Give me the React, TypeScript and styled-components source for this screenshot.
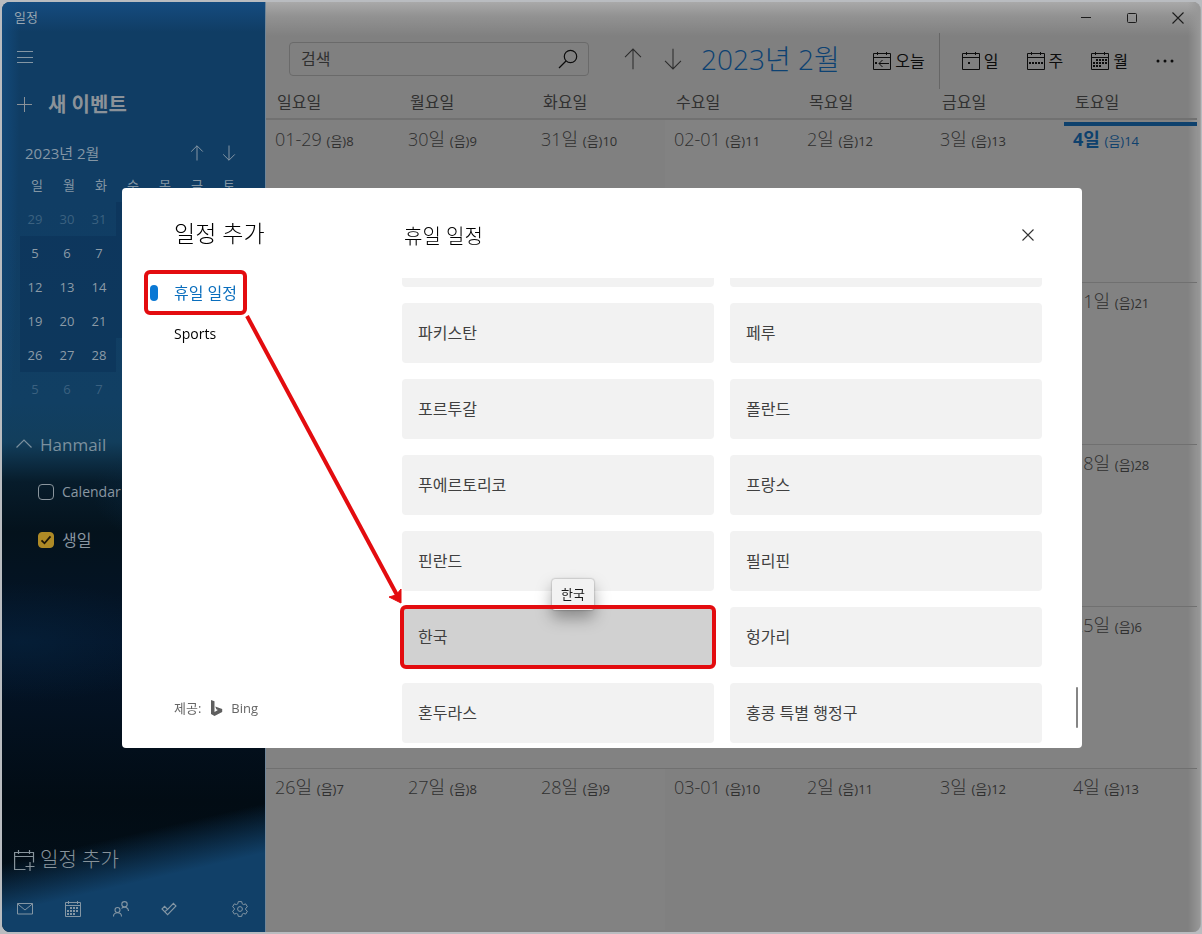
import React from "react";
import styled, { createGlobalStyle, css } from "styled-components";

const GlobalStyle = createGlobalStyle`
  *, *::before, *::after { box-sizing: border-box; }
  body {
    margin: 0;
    background: #b9bcc0;
    font-family: "Open Sans", "Noto Sans CJK KR", sans-serif;
    font-size: 16px;
    line-height: 24px;
  }
  button, input { font: inherit; color: inherit; }
  button { border: 0; padding: 0; margin: 0; background: none; cursor: pointer; }
  h1, h2, h3 { margin: 0; padding: 0; font-size: inherit; font-weight: inherit; }
  svg { display: block; flex: none; }
`;

/* ---------- Window ---------- */

const Page = styled.div`
  display: flex;
  min-height: 100vh;
  padding: 2px 1px 2px 2px;
`;

const AppWindow = styled.div`
  display: flex;
  flex: 1;
  min-width: 0;
  border-right: 1px solid #a2a2a2;
  border-radius: 8px;
  overflow: hidden;
`;

/* ---------- Sidebar ---------- */

const Sidebar = styled.aside`
  display: flex;
  flex-direction: column;
  flex: none;
  width: 263px;
  color: #8496a4;
  background:
    radial-gradient(18px 480px at 0 0, #144e82c0 0, #144e8200 100%),
    linear-gradient(to bottom, #154c80 0, #154c8000 30px),
    linear-gradient(167deg, #11406800 87%, #114068 92%),
    radial-gradient(160px 60px at 20px 640px, #06243f90 0, #06243f00 100%),
    radial-gradient(110px 60px at 200px 490px, #0a2c48c0 0, #0a2c4800 100%),
    linear-gradient(to bottom, #103d64 0, #103d64 200px, #113f63 400px, #123e5c 440px, #071c2b 480px, #04121c 530px, #04152a 640px, #020c14 800px, #03101b 100%);
`;

const AppTitle = styled.h1`
  padding: 3px 12px;
  font-size: 13px;
  color: #98a5b0;
`;

const MenuButton = styled.button`
  display: flex;
  align-items: center;
  width: 48px;
  height: 50px;
  padding-left: 15px;
`;

const NewEvent = styled.button`
  display: flex;
  align-items: center;
  gap: 15px;
  height: 46px;
  padding: 0 15px;
  font-size: 20px;
  font-weight: 700;
  color: #8b9299;
`;

const MonthBar = styled.div`
  display: flex;
  align-items: center;
  gap: 16px;
  height: 50px;
  padding: 0 28px 0 23px;
  font-size: 15px;
  h2 { flex: 1; }
`;

const MiniGrid = styled.div`
  display: grid;
  grid-template-columns: repeat(7, 32px);
  padding-left: 18px;
  font-size: 13px;
  text-align: center;
`;

const MiniLabel = styled.span`
  padding-left: 2px;
  line-height: 14px;
  height: 24px;
`;

const MiniDay = styled.button<{ $inMonth: boolean }>`
  height: 34px;
  padding-right: 2px;
  ${(p) =>
    p.$inMonth
      ? css`background: #09305680; color: #8c9ba7;`
      : css`color: #3b6180;`}
`;

const Account = styled.button`
  display: flex;
  align-items: center;
  gap: 8px;
  height: 46px;
  margin-top: 16px;
  padding: 0 14px;
  font-size: 17px;
  color: #7b909e;
`;

const CalendarItem = styled.label`
  display: flex;
  align-items: center;
  gap: 8px;
  height: 48px;
  padding-left: 36px;
  color: #8a97a1;
`;

const CheckWrap = styled.span`
  position: relative;
  width: 16px;
  height: 16px;
  svg { position: absolute; inset: 0; pointer-events: none; }
`;

const CheckBox = styled.input`
  appearance: none;
  display: block;
  width: 16px;
  height: 16px;
  margin: 0;
  border: 1px solid #8a959d;
  border-radius: 4px;
  &:checked { background: #ae8a26; border-color: #ae8a26; }
`;

const LatinName = styled.span`
  font-size: 14px;
`;

const AddCalendar = styled.button`
  display: flex;
  align-items: center;
  gap: 5px;
  height: 50px;
  margin-top: auto;
  padding: 0 12px 2px;
  font-size: 20px;
  font-weight: 300;
  color: #87939b;
`;

const AppBar = styled.nav`
  display: flex;
  height: 46px;
`;

const AppBarButton = styled.button<{ $end?: boolean }>`
  display: flex;
  align-items: center;
  justify-content: center;
  width: 48px;
  height: 46px;
  padding-right: 2px;
  ${(p) => p.$end && css`margin-left: auto;`}
`;

/* ---------- Main calendar ---------- */

const Main = styled.main`
  display: flex;
  flex-direction: column;
  flex: 1;
  min-width: 0;
  padding: 0 0 2px 1px;
  color: #303030;
  background:
    linear-gradient(to right, #6f8598 0, #6f8598 1px, transparent 1px),
    linear-gradient(to left, #989898 0, #98989800 12px),
    linear-gradient(to bottom, #a9a9a9 0, #929292 14px, #80808000 34px),
    #808080;
`;

const TitleBar = styled.div`
  display: flex;
  justify-content: flex-end;
  height: 31px;
`;

const CaptionButton = styled.button`
  display: flex;
  align-items: center;
  justify-content: center;
  width: 46px;
  padding-left: 2px;
  color: #1c1c1c;
`;

const Toolbar = styled.div`
  display: flex;
  align-items: center;
  height: 56px;
  padding: 0 12px 0 23px;
  color: #0c0c0c;
`;

const MonthTools = styled.div`
  display: flex;
  align-items: center;
  flex: 1;
  min-width: 0;
  padding-bottom: 4px;
`;

const SearchBox = styled.div`
  display: flex;
  align-items: center;
  flex: 0 1 300px;
  min-width: 0;
  height: 34px;
  margin-right: 24px;
  padding: 0 10px 0 11px;
  border: 1px solid #6a6a6a;
  border-radius: 4px;
  input {
    flex: 1;
    min-width: 0;
    padding: 0;
    border: 0;
    outline: 0;
    background: none;
  }
  input::placeholder { color: #303030; opacity: 1; }
`;

const ArrowButton = styled.button`
  display: flex;
  align-items: center;
  justify-content: center;
  width: 40px;
  height: 40px;
  color: #2b2b2b;
`;

const MonthTitle = styled.h2`
  margin-left: 8px;
  font-size: 28px;
  line-height: 40px;
  font-weight: 300;
  white-space: nowrap;
  color: #0d4272;
`;

const ViewButtons = styled.div`
  display: flex;
  align-items: center;
  align-self: stretch;
`;

const ViewButton = styled.button`
  display: flex;
  align-items: center;
  gap: 4px;
  height: 40px;
  padding: 0 14px;
  white-space: nowrap;
`;

const Divider = styled.span`
  align-self: stretch;
  width: 1px;
  margin-right: 8px;
  background: #666;
`;

const WeekHeader = styled.div`
  display: grid;
  grid-template-columns: repeat(7, 1fr);
  height: 31px;
  margin-right: 3px;
  border-bottom: 2px solid #717171;
  span { padding: 1px 0 0 11px; }
`;

const MonthGrid = styled.div`
  display: grid;
  grid-template-columns: repeat(7, 1fr);
  grid-template-rows: repeat(5, minmax(120px, 1fr));
  flex: 1;
  margin-right: 3px;
`;

const DayCell = styled.div<{ $current: boolean; $today: boolean; $first: boolean }>`
  position: relative;
  padding: 6px 0 0 9px;
  border-top: 1px solid ${(p) => (p.$first ? "transparent" : "#707070")};
  font-size: 18px;
  font-weight: 300;
  white-space: nowrap;
  ${(p) => p.$current && css`background: #ffffff05;`}
  ${(p) =>
    p.$today &&
    css`
      color: #0e416d;
      font-weight: 700;
      &::before {
        content: "";
        position: absolute;
        top: 1px;
        left: 0;
        right: 0;
        height: 4px;
        background: #0e416d;
      }
    `}
  small { font-size: 13px; font-weight: 400; }
`;

/* ---------- Dialog ---------- */

const Overlay = styled.div`
  position: fixed;
  inset: 2px 0 0 2px;
  display: grid;
  place-items: center;
`;

const Dialog = styled.section`
  position: relative;
  display: grid;
  grid-template-columns: 278px minmax(0, 1fr);
  width: min(960px, 100% - 32px);
  height: min(560px, 100% - 32px);
  border-radius: 4px;
  background: #fff;
  color: #000;
  overflow: hidden;
`;

const DialogSide = styled.div`
  display: flex;
  flex-direction: column;
  align-items: flex-start;
  padding: 29px 0 28px 24px;
`;

const DialogTitle = styled.h2`
  padding-left: 28px;
  margin-bottom: 23px;
  font-size: 23px;
  line-height: 32px;
  font-weight: 300;
`;

const Ring = css`
  &::after {
    content: "";
    position: absolute;
    inset: -2px;
    border: 4px solid #e30c0f;
    border-radius: 6px;
    pointer-events: none;
  }
`;

const NavItem = styled.button<{ $active?: boolean }>`
  position: relative;
  display: flex;
  align-items: center;
  gap: 16px;
  height: 41px;
  padding: 0 8px 0 4px;
  &::before {
    content: "";
    width: 8px;
    height: 16px;
    border-radius: 4px;
    background: ${(p) => (p.$active ? "#0a78d4" : "transparent")};
  }
  ${(p) => p.$active && css`color: #0a6ebd;`}
  ${(p) => p.$active && Ring}
`;

const Provider = styled.div`
  display: flex;
  align-items: center;
  gap: 8px;
  margin-top: auto;
  padding-left: 28px;
  font-size: 13px;
  color: #666;
  svg { margin-left: 2px; }
`;

const DialogBody = styled.div`
  display: flex;
  flex-direction: column;
  min-width: 0;
  min-height: 0;
`;

const DialogHead = styled.div`
  display: flex;
  align-items: center;
  justify-content: space-between;
  height: 90px;
  padding: 4px 38px 0 4px;
  font-size: 20px;
  font-weight: 300;
  h3 { padding-top: 4px; }
`;

const CloseButton = styled.button`
  display: flex;
  align-items: center;
  justify-content: center;
  width: 32px;
  height: 32px;
  color: #333;
`;

const ListArea = styled.div`
  display: flex;
  flex: 1;
  min-height: 0;
  padding-right: 4px;
`;

const Options = styled.div`
  display: grid;
  grid-template-columns: repeat(2, minmax(0, 1fr));
  grid-auto-rows: 60px;
  align-content: end;
  flex: 1;
  gap: 16px;
  padding: 0 2px 5px;
  overflow: hidden;
`;

const Option = styled.button<{ $active?: boolean }>`
  position: relative;
  padding: 0 16px;
  border-radius: 4px;
  background: ${(p) => (p.$active ? "#d1d1d1" : "#f2f2f2")};
  color: #404040;
  text-align: left;
  ${(p) => p.$active && Ring}
`;

const Tooltip = styled.span`
  position: absolute;
  left: 150px;
  bottom: 57px;
  padding: 3px 9px 4px;
  border-radius: 3px;
  background: #f2f2f2;
  box-shadow: 0 0 2px #00000070, 0 8px 16px #00000058;
  color: #1a1a1a;
  font-size: 13px;
`;

const ScrollTrack = styled.div`
  display: flex;
  flex-direction: column;
  justify-content: flex-end;
  margin-left: 32px;
  padding-bottom: 20px;
  &::after {
    content: "";
    width: 2px;
    height: 41px;
    border-radius: 1px;
    background: #858585;
  }
`;

const Arrow = styled.svg`
  position: absolute;
  left: 120px;
  top: 120px;
  pointer-events: none;
`;

/* ---------- Icons ---------- */

const line = { fill: "none", stroke: "currentColor", strokeWidth: 1 };

const UpArrow = ({ size = 16 }: { size?: number }) => (
  <svg width={size} height={size} viewBox="0 0 16 16" {...line} strokeWidth={size > 16 ? 0.75 : 1}>
    <path d="M8 15.5V.8M2.2 6.6 8 .8l5.8 5.8" />
  </svg>
);

const DownArrow = ({ size = 16 }: { size?: number }) => (
  <svg width={size} height={size} viewBox="0 0 16 16" {...line} strokeWidth={size > 16 ? 0.75 : 1}>
    <path d="M8 .5v14.7M2.2 9.4 8 15.2l5.8-5.8" />
  </svg>
);

const CalendarFrame = ({ children }: { children: React.ReactNode }) => (
  <svg width="18" height="18" viewBox="0 0 18 18" {...line}>
    <path d="M.5 1.5h17v16H.5zM.5 5.5h17M4.5 0v3M13.5 0v3" />
    {children}
  </svg>
);

const dots = (cells: number[][]) =>
  cells.map(([x, y]) => (
    <rect key={`${x}-${y}`} x={x} y={y} width="2" height="2" fill="currentColor" stroke="none" />
  ));

const TodayIcon = () => (
  <CalendarFrame>
    <path d="M6 11.5h10M9.5 8 6 11.5 9.5 15" />
    {dots([[2, 10]])}
  </CalendarFrame>
);
const DayIcon = () => <CalendarFrame>{dots([[6, 10]])}</CalendarFrame>;
const WeekIcon = () => (
  <CalendarFrame>{dots([[2, 10], [5, 10], [8, 10], [11, 10], [14, 10]])}</CalendarFrame>
);
const MonthIcon = () => (
  <CalendarFrame>
    {dots([
      [5, 7], [8, 7], [11, 7], [14, 7],
      [2, 10], [5, 10], [8, 10], [11, 10], [14, 10],
      [2, 13], [5, 13], [8, 13],
    ])}
  </CalendarFrame>
);

const MenuIcon = () => (
  <svg width="16" height="12" viewBox="0 0 16 12" {...line}>
    <path d="M0 .5h16M0 6.5h16M0 11.5h16" />
  </svg>
);
const PlusIcon = () => (
  <svg width="16" height="16" viewBox="0 0 16 16" {...line}>
    <path d="M0 7.5h15M7.5 0v15" />
  </svg>
);
const ChevronUp = () => (
  <svg width="16" height="12" viewBox="0 0 16 12" {...line} strokeWidth={1.2}>
    <path d="M.5 8.500 8 1l7.500 7.500" />
  </svg>
);
const SearchIcon = () => (
  <svg width="20" height="20" viewBox="0 0 20 20" {...line} strokeWidth={1.2}>
    <circle cx="12.500" cy="7.500" r="6.200" />
    <path d="M8 12 1 19" />
  </svg>
);
const CrossIcon = () => (
  <svg width="12" height="12" viewBox="0 0 12 12" {...line} strokeWidth={1.1}>
    <path d="M.5.5l11 11M11.500.5l-11 11" />
  </svg>
);
const MinimizeIcon = () => (
  <svg width="10" height="10" viewBox="0 0 10 10" {...line}>
    <path d="M0 4.500h10" />
  </svg>
);
const MaximizeIcon = () => (
  <svg width="10" height="10" viewBox="0 0 10 10" {...line}>
    <rect x=".5" y=".5" width="9" height="9" rx="1" />
  </svg>
);
const MoreIcon = () => (
  <svg width="18" height="4" viewBox="0 0 18 4" fill="currentColor">
    <circle cx="2" cy="2" r="1.500" />
    <circle cx="9" cy="2" r="1.500" />
    <circle cx="16" cy="2" r="1.500" />
  </svg>
);
const AddCalendarIcon = () => (
  <svg width="21" height="21" viewBox="0 0 21 21" {...line} strokeWidth={1.2}>
    <path d="M11.500 19.500H.6V2.500h18.900v10M.6 6.500h18.900M4.500 0v4M15.500 0v4M11.500 16.500h9M16 12v9" />
  </svg>
);
const MailIcon = () => (
  <svg width="16" height="12" viewBox="0 0 16 12" {...line}>
    <path d="M.5.5h15v10.500H.5zM.5.8 8 7l7.500-6.200" />
  </svg>
);
const SmallCalendarIcon = () => (
  <svg width="16" height="16" viewBox="0 0 16 16" {...line}>
    <path d="M.5 1.500h15v14H.5zM.5 4.500h15M3.500 0v3M12.500 0v3" />
    {dots([[5, 6], [8, 6], [11, 6], [2, 9], [5, 9], [8, 9], [11, 9], [2, 12], [5, 12], [8, 12]])}
  </svg>
);
const PeopleIcon = () => (
  <svg width="16" height="16" viewBox="0 0 16 16" {...line} strokeWidth={1.1}>
    <circle cx="4.500" cy="9" r="2.500" />
    <path d="M.5 15.500c0-5 8-5 8 0" />
    <circle cx="11.500" cy="3.300" r="2.700" />
    <path d="M8.500 7.500c2-2.500 7-1.500 7 2.500" />
  </svg>
);
const TodoIcon = () => (
  <svg width="16" height="14" viewBox="0 0 16 14" {...line} strokeWidth={1.1}>
    <path d="M1 7 3.600 4.400 6.600 7.400 12.400 1.400 15 4 6.600 12.600zM3.700 9.700 6.600 7.400" />
  </svg>
);
const GearIcon = () => (
  <svg width="16" height="16" viewBox="0 0 16 16" {...line}>
    <path d="M6.300.6h3.400l.5 2.200 1.300.8 2.200-.7 1.700 2.900-1.700 1.500v1.400l1.700 1.500-1.700 2.900-2.200-.7-1.300.8-.5 2.200H6.300l-.5-2.200-1.300-.8-2.200.7-1.700-2.900 1.700-1.500V7.300L.6 5.800l1.700-2.900 2.200.7 1.300-.8z" />
    <circle cx="8" cy="8" r="2.400" />
  </svg>
);
const BingIcon = () => (
  <svg width="12" height="16" viewBox="0 0 12 16" fill="#5f5f5f">
    <path d="M0 0l3.500 1.300v10.800L6.900 10 5.300 9.200 4.200 6.400l7 2.500v3.200l-7.700 3.900L0 13.900z" />
  </svg>
);
const TickIcon = () => (
  <svg width="16" height="16" viewBox="0 0 16 16" fill="none" stroke="#1c1608" strokeWidth="1.800">
    <path d="M3.500 8.300l3 3 6-7" />
  </svg>
);

/* ---------- Data ---------- */

const weekdays = ["일", "월", "화", "수", "목", "금", "토"];

const miniDays = [
  29, 30, 31, 1, 2, 3, 4,
  ...Array.from({ length: 24 }, (_, i) => i + 5),
  1, 2, 3, 4, 5, 6, 7, 8, 9, 10, 11,
];

const monthDays = Array.from({ length: 35 }, (_, i) => {
  const offset = i - 2;
  const current = offset >= 1 && offset <= 28;
  let label = `${offset}일`;
  if (i === 0) label = "01-29";
  else if (offset < 1) label = `${31 + offset}일`;
  else if (offset === 1) label = "02-01";
  else if (offset === 29) label = "03-01";
  else if (offset > 29) label = `${offset - 28}일`;
  const lunar = i + 8 > 29 ? i - 21 : i + 8;
  return { label, lunar, current, today: offset === 4 };
});

const countries = [
  "파나마", "파라과이",
  "파키스탄", "페루",
  "포르투갈", "폴란드",
  "푸에르토리코", "프랑스",
  "핀란드", "필리핀",
  "한국", "헝가리",
  "혼두라스", "홍콩 특별 행정구",
];

/* ---------- App ---------- */

export default function App() {
  return (
    <>
      <GlobalStyle />
      <Page>
        <AppWindow>
          <Sidebar>
            <AppTitle>일정</AppTitle>
            <MenuButton aria-label="메뉴"><MenuIcon /></MenuButton>
            <NewEvent><PlusIcon />새 이벤트</NewEvent>
            <MonthBar>
              <h2>2023년 2월</h2>
              <button aria-label="이전 달"><UpArrow /></button>
              <button aria-label="다음 달"><DownArrow /></button>
            </MonthBar>
            <MiniGrid>
              {weekdays.map((d) => <MiniLabel key={d}>{d}</MiniLabel>)}
              {miniDays.map((d, i) => (
                <MiniDay key={i} $inMonth={i >= 3 && i < 31}>{d}</MiniDay>
              ))}
            </MiniGrid>
            <Account><ChevronUp />Hanmail</Account>
            <CalendarItem>
              <CheckWrap><CheckBox type="checkbox" /></CheckWrap>
              <LatinName>Calendar</LatinName>
            </CalendarItem>
            <CalendarItem>
              <CheckWrap><CheckBox type="checkbox" defaultChecked /><TickIcon /></CheckWrap>
              생일
            </CalendarItem>
            <AddCalendar><AddCalendarIcon />일정 추가</AddCalendar>
            <AppBar>
              <AppBarButton aria-label="메일"><MailIcon /></AppBarButton>
              <AppBarButton aria-label="달력"><SmallCalendarIcon /></AppBarButton>
              <AppBarButton aria-label="피플"><PeopleIcon /></AppBarButton>
              <AppBarButton aria-label="할 일"><TodoIcon /></AppBarButton>
              <AppBarButton $end aria-label="설정"><GearIcon /></AppBarButton>
            </AppBar>
          </Sidebar>

          <Main>
            <TitleBar>
              <CaptionButton aria-label="최소화"><MinimizeIcon /></CaptionButton>
              <CaptionButton aria-label="최대화"><MaximizeIcon /></CaptionButton>
              <CaptionButton aria-label="닫기"><CrossIcon /></CaptionButton>
            </TitleBar>
            <Toolbar>
              <MonthTools>
                <SearchBox>
                  <input type="text" placeholder="검색" aria-label="검색" />
                  <button aria-label="찾기"><SearchIcon /></button>
                </SearchBox>
                <ArrowButton aria-label="이전"><UpArrow size={22} /></ArrowButton>
                <ArrowButton aria-label="다음"><DownArrow size={22} /></ArrowButton>
                <MonthTitle>2023년 2월</MonthTitle>
              </MonthTools>
              <ViewButtons>
                <ViewButton><TodayIcon />오늘</ViewButton>
                <Divider />
                <ViewButton><DayIcon />일</ViewButton>
                <ViewButton><WeekIcon />주</ViewButton>
                <ViewButton><MonthIcon />월</ViewButton>
                <ViewButton aria-label="더 보기"><MoreIcon /></ViewButton>
              </ViewButtons>
            </Toolbar>
            <WeekHeader>
              {weekdays.map((d) => <span key={d}>{d}요일</span>)}
            </WeekHeader>
            <MonthGrid>
              {monthDays.map((d, i) => (
                <DayCell key={i} $current={d.current} $today={d.today} $first={i < 7}>
                  {d.label} <small>(음){d.lunar}</small>
                </DayCell>
              ))}
            </MonthGrid>
          </Main>
        </AppWindow>
      </Page>

      <Overlay>
        <Dialog role="dialog" aria-label="일정 추가">
          <DialogSide>
            <DialogTitle>일정 추가</DialogTitle>
            <NavItem $active>휴일 일정</NavItem>
            <NavItem><LatinName>Sports</LatinName></NavItem>
            <Provider>제공: <BingIcon />Bing</Provider>
          </DialogSide>
          <DialogBody>
            <DialogHead>
              <h3>휴일 일정</h3>
              <CloseButton aria-label="닫기"><CrossIcon /></CloseButton>
            </DialogHead>
            <ListArea>
              <Options>
                {countries.map((name) => (
                  <Option key={name} $active={name === "한국"}>
                    {name}
                    {name === "한국" && <Tooltip role="tooltip">한국</Tooltip>}
                  </Option>
                ))}
              </Options>
              <ScrollTrack />
            </ListArea>
          </DialogBody>
          <Arrow width="164" height="300" viewBox="0 0 164 300" aria-hidden="true">
            <path d="M5 8 155 287" stroke="#e30c0f" strokeWidth="4" />
            <path d="M159 295l-12-6 7-2 5-6z" fill="#e30c0f" stroke="#e30c0f" strokeLinejoin="round" />
          </Arrow>
        </Dialog>
      </Overlay>
    </>
  );
}
